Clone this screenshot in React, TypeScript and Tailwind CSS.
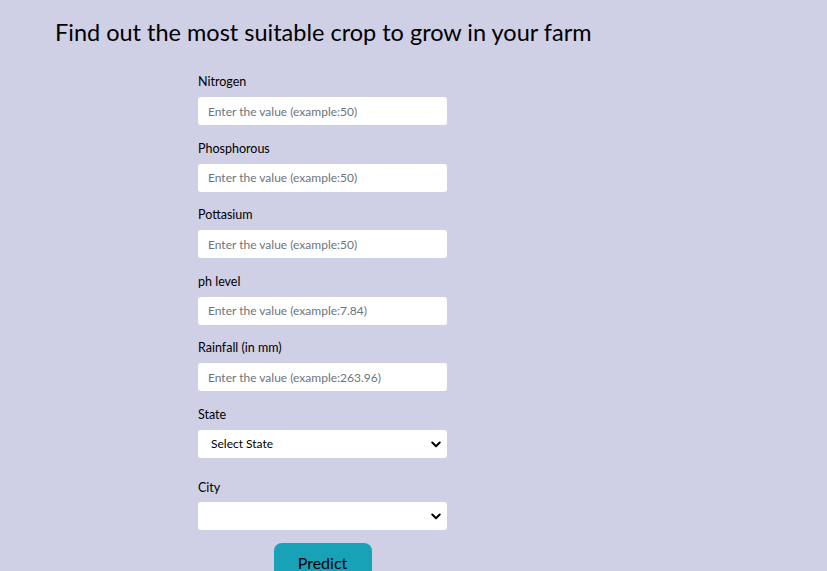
import React from "react";

const fields = [
  { label: "Nitrogen", ph: "Enter the value (example:50)" },
  { label: "Phosphorous", ph: "Enter the value (example:50)" },
  { label: "Pottasium", ph: "Enter the value (example:50)" },
  { label: "ph level", ph: "Enter the value (example:7.84)" },
  { label: "Rainfall (in mm)", ph: "Enter the value (example:263.96)" },
];

function Chevron() {
  return (
    <svg width="10" height="7" viewBox="0 0 10 7" className="absolute right-[6px] top-[11px] pointer-events-none">
      <path d="M1.3 1.5 L5 5.2 L8.7 1.5" fill="none" stroke="#000" strokeWidth="2" strokeLinecap="round" strokeLinejoin="round" />
    </svg>
  );
}

export default function App() {
  return (
    <div
      className="w-[827px] h-[571px] overflow-hidden bg-[#cfcfe5] text-black"
      style={{ fontFamily: 'Lato, "Noto Sans", sans-serif' }}
    >
      <h1 className="pl-[55px] pt-[16px] text-[23.5px] leading-[32px] font-normal">
        Find out the most suitable crop to grow in your farm
      </h1>
      <div className="ml-[198px] w-[249px] mt-[26px] flex flex-col">
        {fields.map((f) => (
          <div key={f.label} className="flex flex-col h-[66.5px]">
            <label className="text-[12.5px] leading-[15px] h-[15px]">{f.label}</label>
            <input
              className="mt-[8px] h-[28px] w-full bg-white rounded-[3px] px-[10px] text-[12px] outline-none placeholder:text-[#6c757d]"
              placeholder={f.ph}
            />
          </div>
        ))}
        <div className="flex flex-col">
          <label className="text-[12.5px] leading-[15px] h-[15px]">State</label>
          <div className="relative mt-[8px] h-[28px] bg-white rounded-[3px] flex items-center pl-[13px] text-[12px]">
            Select State
            <Chevron />
          </div>
        </div>
        <div className="flex flex-col mt-[22px]">
          <label className="text-[12.5px] leading-[15px] h-[20px]">City</label>
          <div className="relative mt-[2px] h-[28px] bg-white rounded-[3px]">
            <Chevron />
          </div>
        </div>
        <div className="flex justify-center mt-[13px]">
          <button className="w-[98px] h-[40px] bg-[#17a2b8] rounded-[8px] text-[16px] leading-[20px] text-black">
            Predict
          </button>
        </div>
      </div>
    </div>
  );
}
